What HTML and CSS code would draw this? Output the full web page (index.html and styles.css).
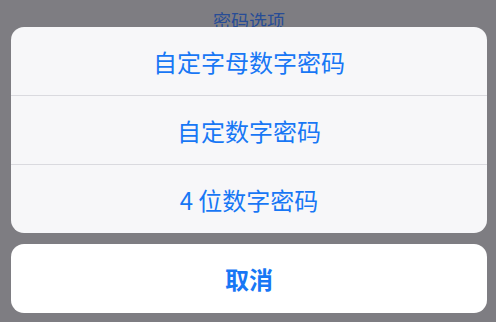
FILE: index.html
```html
<!DOCTYPE html>
<html lang="zh">
<head>
<meta charset="utf-8">
<link rel="stylesheet" href="styles.css">
</head>
<body>
<div class="sheet">
  <div class="title">密码选项</div>
  <div class="group">
    <div class="row">自定字母数字密码</div>
    <div class="row">自定数字密码</div>
    <div class="row">4 位数字密码</div>
  </div>
  <div class="cancel">取消</div>
</div>
</body>
</html>
```
FILE: styles.css
```css
html, body {
  margin: 0;
  padding: 0;
  background: #7e7d82;
  width: 496px;
  height: 322px;
  overflow: hidden;
}
.sheet {
  display: flex;
  flex-direction: column;
  padding: 0 9px 0 11px;
  font-family: "Noto Sans CJK SC", "Noto Sans", sans-serif;
}
.title {
  height: 27px;
  padding-top: 11px;
  box-sizing: border-box;
  font-size: 18px;
  line-height: 18px;
  color: #274c96;
  text-align: center;
  white-space: nowrap;
}
.group {
  position: relative;
  background: #f7f7f9;
  border-radius: 13px;
  overflow: hidden;
}
.row {
  height: 68px;
  display: flex;
  align-items: center;
  justify-content: center;
  font-size: 24px;
  color: #1877f5;
}
.row + .row {
  border-top: 1px solid #dadadf;
}
.cancel {
  margin-top: 11px;
  height: 69px;
  background: #ffffff;
  border-radius: 13px;
  display: flex;
  align-items: center;
  justify-content: center;
  font-size: 24px;
  font-weight: bold;
  color: #1877f5;
}
```
